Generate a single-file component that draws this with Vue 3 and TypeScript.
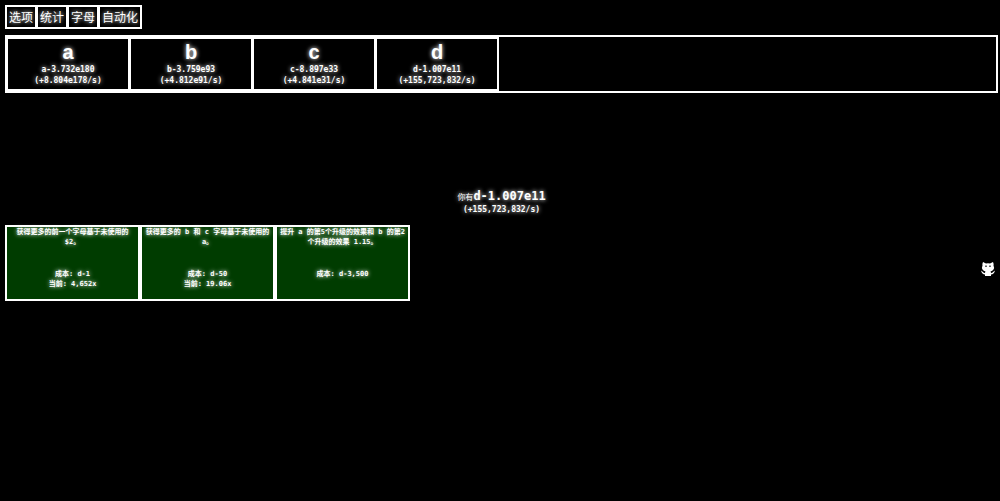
<script setup lang="ts">
interface Layer {
  letter: string
  amount: string
  gain: string
}

interface Upgrade {
  id: number
  text: string
  cost: string
  current?: string
}

const menu: string[] = ['选项', '统计', '字母', '自动化']

const layers: Layer[] = [
  { letter: 'a', amount: '3.732e180', gain: '8.804e178' },
  { letter: 'b', amount: '3.759e93', gain: '4.812e91' },
  { letter: 'c', amount: '8.897e33', gain: '4.841e31' },
  { letter: 'd', amount: '1.007e11', gain: '155,723,832' },
]

const upgrades: Upgrade[] = [
  { id: 1, text: '获得更多的前一个字母基于未使用的 $2。', cost: 'd-1', current: '4,652x' },
  { id: 2, text: '获得更多的 b 和 c 字母基于未使用的 a。', cost: 'd-50', current: '19.06x' },
  { id: 3, text: '提升 a 的第5个升级的效果和 b 的第2个升级的效果 1.15。', cost: 'd-3,500' },
]
</script>

<template>
  <div class="game">
    <nav class="menu">
      <button v-for="item in menu" :key="item" type="button" class="menu-button">{{ item }}</button>
    </nav>

    <section class="layers">
      <button v-for="layer in layers" :key="layer.letter" type="button" class="layer">
        <span class="letter">{{ layer.letter }}</span>
        <span class="line">{{ layer.letter }}-{{ layer.amount }}</span>
        <span class="line">(+{{ layer.gain }}/s)</span>
      </button>
    </section>

    <main>
      <div class="total">
        <div class="have">你有<strong>d-1.007e11</strong></div>
        <div class="rate">(+155,723,832/s)</div>
      </div>

      <div class="upgrades">
        <button v-for="upgrade in upgrades" :key="upgrade.id" type="button" class="upgrade">
          <span class="description">{{ upgrade.text }}</span>
          <span class="cost">成本: {{ upgrade.cost }}</span>
          <span v-if="upgrade.current">当前: {{ upgrade.current }}</span>
        </button>
      </div>
    </main>

    <a class="github" href="#" aria-label="GitHub">
      <svg viewBox="0 0 28 28" width="14" height="14" aria-hidden="true">
        <path
          fill="#fff"
          d="M4 0 L10 3 Q14 2 18 3 L24 0 Q26 4 25 7 Q27 11 25 15 Q23 18 19 19 Q20 20 20 22 Q23 22 24 20 L28 17 Q26 25 20 25 V28 H8 V25 Q2 25 0 17 L4 20 Q5 22 8 22 Q8 20 9 19 Q5 18 3 15 Q1 11 3 7 Q2 4 4 0Z"
        />
        <path fill="#666" d="M8 7 H12 V10 H8Z M16 7 H20 V10 H16Z" />
      </svg>
    </a>
  </div>
</template>

<style>
body {
  background: #000;
}
</style>

<style scoped>
.game {
  box-sizing: border-box;
  min-height: 100vh;
  padding: 5px 2px 5px 5px;
  background: #000;
  color: #fff;
  font-family: "DejaVu Sans Mono", "Noto Sans CJK SC", monospace;
  font-size: 8px;
  text-shadow: 0 0 4px #fff;
}

button {
  margin: 0;
  box-sizing: border-box;
  border: 2px solid #fff;
  border-radius: 0;
  background: #000;
  color: inherit;
  font: inherit;
  text-shadow: inherit;
  cursor: pointer;
}

.menu {
  display: flex;
}

.menu-button {
  height: 24px;
  padding: 2px 2px 0;
  font-size: 12px;
  line-height: 18px;
}

.menu-button + .menu-button {
  margin-left: -1px;
}

.layers {
  display: flex;
  margin-top: 6px;
  border: 2px solid #fff;
}

.layer {
  display: flex;
  flex-direction: column;
  align-items: center;
  width: 124px;
  margin-left: -1px;
  padding: 1px 0 3px;
  font-size: 8px;
  font-weight: bold;
  line-height: 11px;
}

.letter {
  font-family: "Liberation Sans", sans-serif;
  font-size: 20px;
  font-weight: bold;
  line-height: 24px;
}

.total {
  margin-top: 96px;
  text-align: center;
}

.have {
  line-height: 14px;
}

.have strong {
  font-size: 12px;
}

.rate {
  font-weight: bold;
  line-height: 10px;
}

.upgrades {
  display: flex;
  margin-top: 10px;
}

.upgrade {
  display: flex;
  flex-direction: column;
  align-items: center;
  justify-content: flex-start;
  width: 135px;
  height: 76px;
  padding: 0;
  background: #003c00;
  font-size: 7px;
  font-weight: bold;
  line-height: 10px;
}

.description {
  min-height: 42px;
}

.github {
  position: fixed;
  top: 262px;
  right: 5px;
  line-height: 0;
}
</style>
